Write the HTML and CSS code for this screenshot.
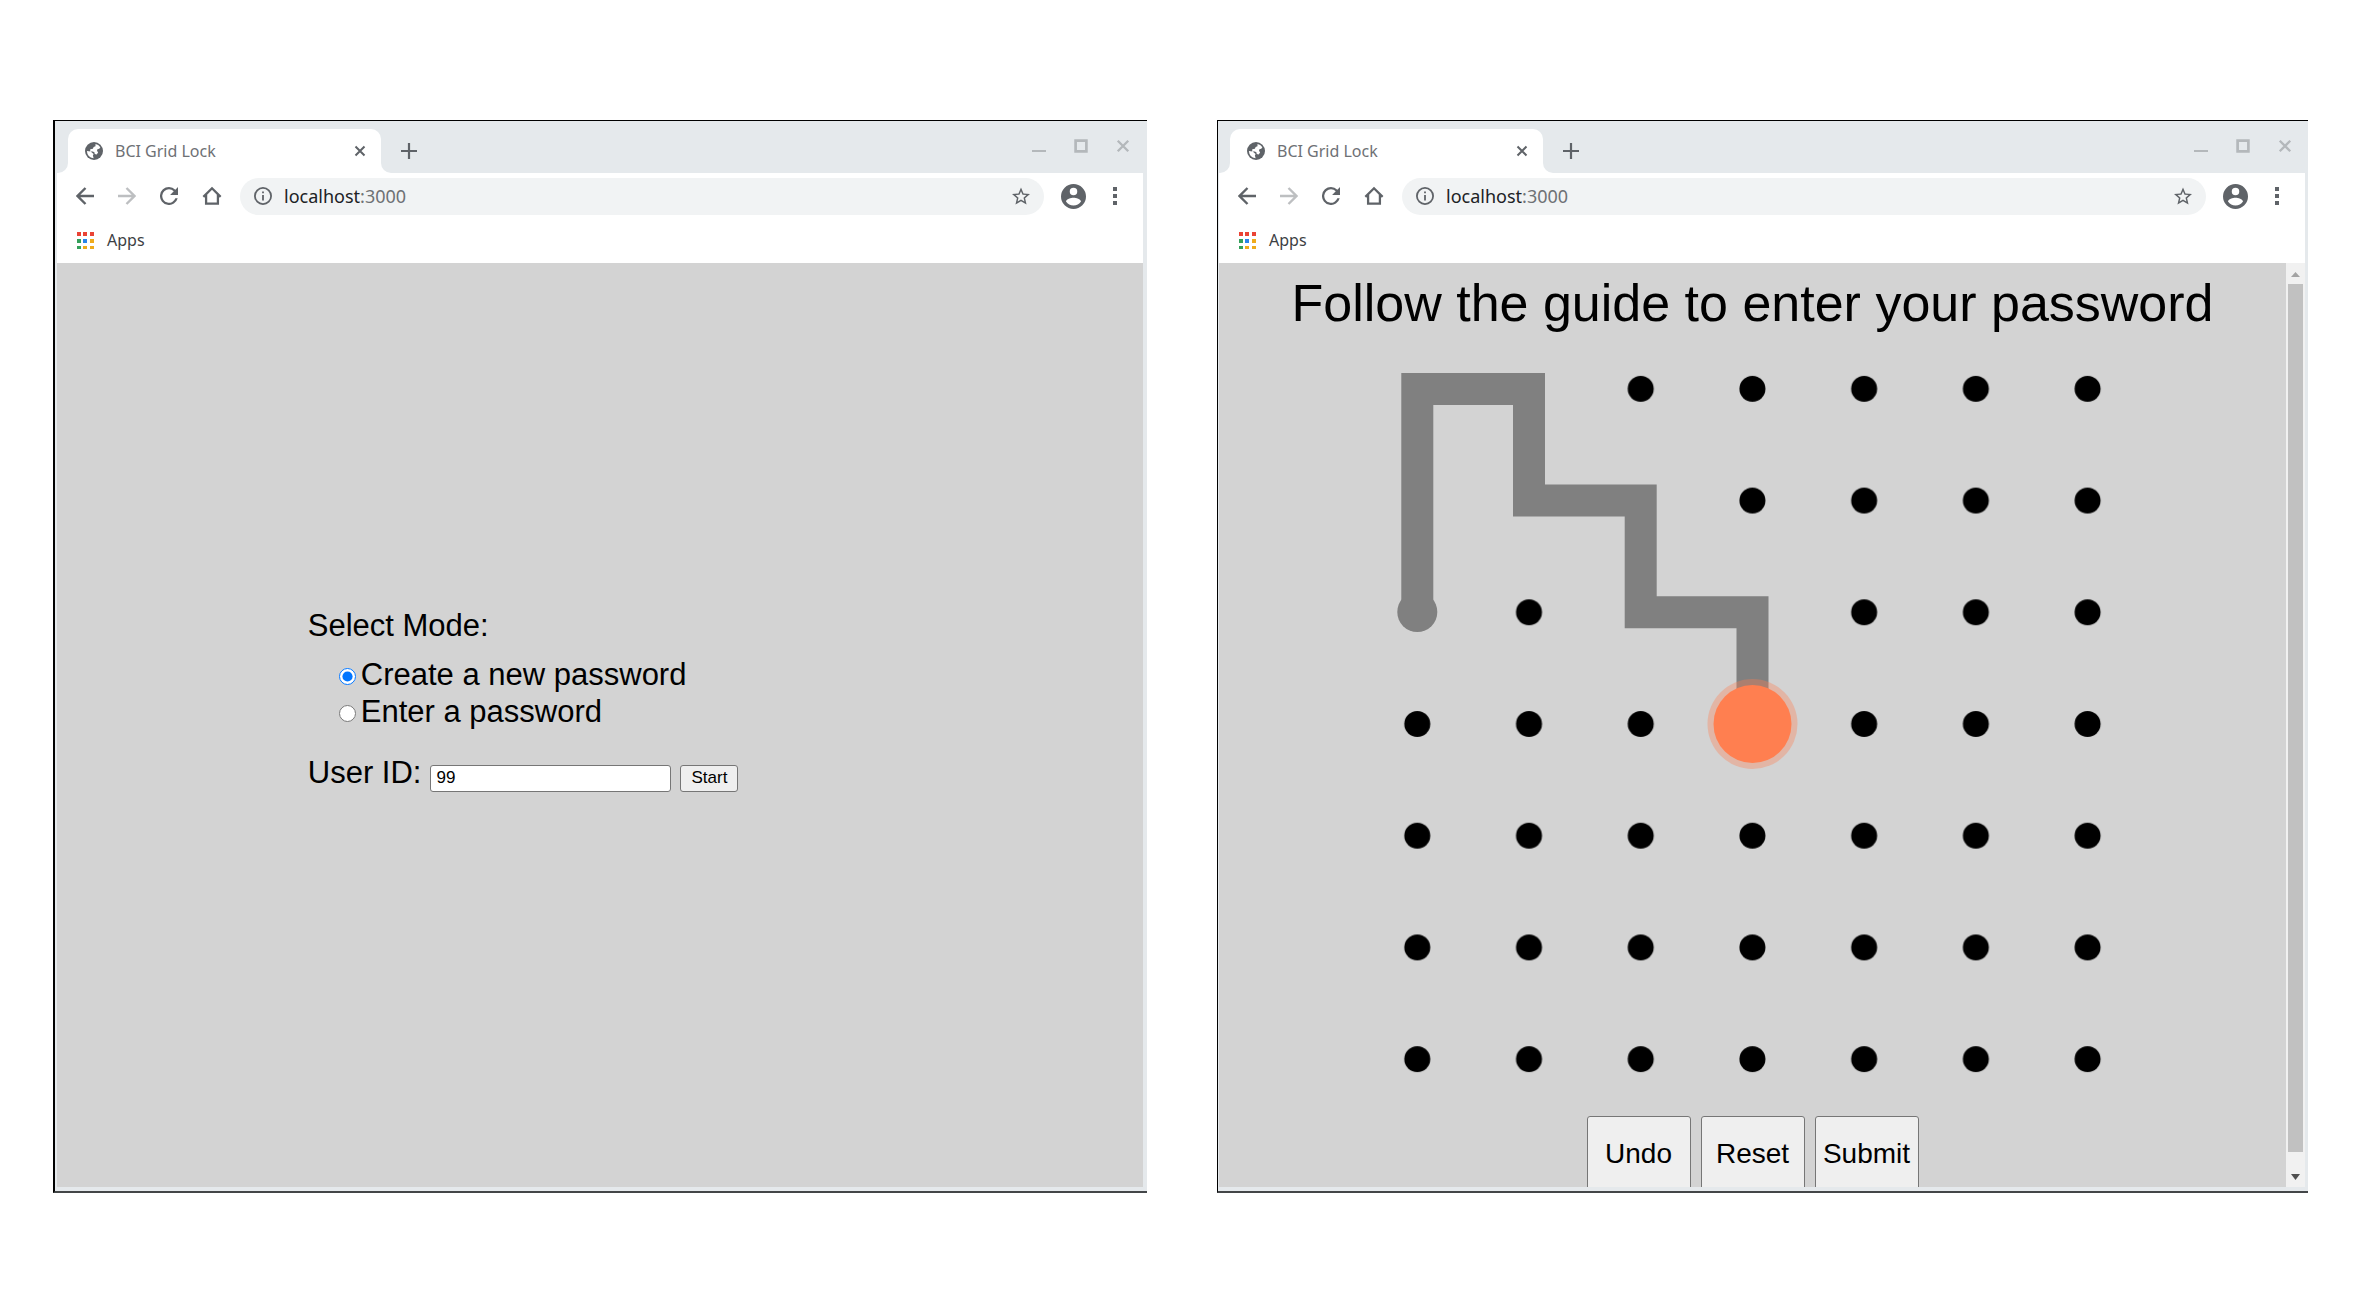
FILE: index.html
```html
<!DOCTYPE html>
<html lang="en">
<head>
<meta charset="utf-8">
<title>BCI Grid Lock</title>
<link rel="stylesheet" href="styles.css">
</head>
<body>
<svg class="defs" aria-hidden="true">
  <symbol id="globe" viewBox="0 0 24 24"><circle cx="12" cy="12" r="12" fill="#5f6368"/><path fill="#fff" d="M14 2.500q4 .5 6.500 4.500l-1.500 2-2.500.5-.5 2 1.500 2.500-2 2.500-2.500-.5-.5-2.500-2-1H7V9.500l3.500-.5 1-2.500 2.500-1zM2.500 12l5 .5 4 3.500-1 2 1 3.500Q3 20.500 2.500 12z"/></symbol>
  <symbol id="close" viewBox="0 0 12 12"><path d="M1.500 1.500l9 9M10.500 1.500l-9 9" stroke="currentColor" stroke-width="2"/></symbol>
  <symbol id="plus" viewBox="0 0 16 16"><path d="M8 0v16M0 8h16" stroke="#5f6368" stroke-width="2.200"/></symbol>
  <symbol id="back" viewBox="0 0 18 18"><path d="M18 9H1.500M9.500 1L1.500 9l8 8" fill="none" stroke="currentColor" stroke-width="2.400"/></symbol>
  <symbol id="reload" viewBox="4 4 16 16"><path fill="#5f6368" d="M17.650 6.350A7.958 7.958 0 0 0 12 4a8 8 0 1 0 7.730 10h-2.080A6 6 0 1 1 12 6c1.660 0 3.140.69 4.220 1.780L13 11h7V4z"/></symbol>
  <symbol id="home" viewBox="0 0 22 21"><path d="M1.500 11.500L11 2l9.500 9.500M4.500 9v10h13V9" fill="none" stroke="#5f6368" stroke-width="2.500"/></symbol>
  <symbol id="info" viewBox="2 2 20 20"><path fill="#5f6368" d="M11 7h2v2h-2zm0 4h2v6h-2zm1-9a10 10 0 1 0 0 20 10 10 0 0 0 0-20zm0 18a8 8 0 1 1 0-16 8 8 0 0 1 0 16z"/></symbol>
  <symbol id="star" viewBox="2 2 20 19"><path fill="#5f6368" d="M22 9.240l-7.190-.62L12 2 9.190 8.630 2 9.240l5.460 4.730L5.820 21 12 17.270 18.180 21l-1.630-7.030L22 9.240zM12 15.400l-3.760 2.270 1-4.280-3.320-2.880 4.380-.38L12 6.100l1.710 4.040 4.380.38-3.320 2.880 1 4.280L12 15.400z"/></symbol>
  <symbol id="avatar" viewBox="2 2 20 20"><path fill="#5f6368" d="M12 2a10 10 0 1 0 0 20 10 10 0 0 0 0-20zm0 3a3 3 0 1 1 0 6 3 3 0 0 1 0-6zm0 14.200a7.200 7.200 0 0 1-6-3.220c.03-1.990 4-3.080 6-3.080s5.970 1.090 6 3.080a7.200 7.200 0 0 1-6 3.220z"/></symbol>
  <symbol id="dots" viewBox="0 0 4 18"><path fill="#5f6368" d="M0 0h4v4H0zM0 7h4v4H0zM0 14h4v4H0z"/></symbol>
  <symbol id="min" viewBox="0 0 14 14"><path d="M0 12h14" stroke="#b4b8bb" stroke-width="2"/></symbol>
  <symbol id="max" viewBox="0 0 13 13"><path d="M1.500 1.500h10v10h-10z" fill="none" stroke="#b4b8bb" stroke-width="2.500"/></symbol>
  <symbol id="apps" viewBox="0 0 17 17"><path fill="#ea4335" d="M0 0h4v4H0zM6 0h4v4H6zM13 0h4v4h-4z"/><path fill="#34a05a" d="M0 7h4v4H0zM0 14h4v3H0z"/><path fill="#2a85ea" d="M6 7h4v4H6z"/><path fill="#efab1c" d="M13 7h4v4h-4zM6 14h4v3H6zM13 14h4v3h-4z"/></symbol>
</svg>

<section class="window window-setup">
  <header class="tabstrip">
    <div class="strip-start"></div>
    <div class="tab-slot"><div class="tab">
      <svg class="i18"><use href="#globe"/></svg>
      <span class="tab-title">BCI Grid Lock</span>
      <button class="icon" aria-label="Close tab"><svg class="i12"><use href="#close"/></svg></button>
    </div></div>
    <div class="strip-rest">
      <button class="icon" aria-label="New tab"><svg class="i16"><use href="#plus"/></svg></button>
      <div class="controls">
        <button class="icon" aria-label="Minimize"><svg class="i14"><use href="#min"/></svg></button>
        <button class="icon" aria-label="Maximize"><svg class="i14"><use href="#max"/></svg></button>
        <button class="icon" aria-label="Close window"><svg class="i14"><use href="#close"/></svg></button>
      </div>
    </div>
  </header>
  <nav class="toolbar">
    <button class="icon" aria-label="Back"><svg class="i18"><use href="#back"/></svg></button>
    <button class="icon forward" aria-label="Forward"><svg class="i18"><use href="#back"/></svg></button>
    <button class="icon" aria-label="Reload"><svg class="i18"><use href="#reload"/></svg></button>
    <button class="icon" aria-label="Home"><svg class="i20"><use href="#home"/></svg></button>
    <div class="address">
      <svg class="i18"><use href="#info"/></svg>
      <span class="url">localhost<span class="port">:3000</span></span>
      <button class="icon" aria-label="Bookmark"><svg class="i18"><use href="#star"/></svg></button>
    </div>
    <button class="icon" aria-label="Profile"><svg class="i25"><use href="#avatar"/></svg></button>
    <button class="icon menu" aria-label="Menu"><svg class="i18"><use href="#dots"/></svg></button>
  </nav>
  <div class="bookmarks"><a href="#apps"><svg class="i17"><use href="#apps"/></svg>Apps</a></div>
  <main class="page">
    <form class="setup">
      <fieldset class="modes">
        <legend>Select Mode:</legend>
        <label><input type="radio" name="mode" checked>Create a new password</label>
        <label><input type="radio" name="mode">Enter a password</label>
      </fieldset>
      <div class="user">
        <label for="uid">User ID:</label>
        <input id="uid" type="text" value="99">
        <button type="button">Start</button>
      </div>
    </form>
  </main>
</section>

<section class="window window-grid">
  <header class="tabstrip">
    <div class="strip-start"></div>
    <div class="tab-slot"><div class="tab">
      <svg class="i18"><use href="#globe"/></svg>
      <span class="tab-title">BCI Grid Lock</span>
      <button class="icon" aria-label="Close tab"><svg class="i12"><use href="#close"/></svg></button>
    </div></div>
    <div class="strip-rest">
      <button class="icon" aria-label="New tab"><svg class="i16"><use href="#plus"/></svg></button>
      <div class="controls">
        <button class="icon" aria-label="Minimize"><svg class="i14"><use href="#min"/></svg></button>
        <button class="icon" aria-label="Maximize"><svg class="i14"><use href="#max"/></svg></button>
        <button class="icon" aria-label="Close window"><svg class="i14"><use href="#close"/></svg></button>
      </div>
    </div>
  </header>
  <nav class="toolbar">
    <button class="icon" aria-label="Back"><svg class="i18"><use href="#back"/></svg></button>
    <button class="icon forward" aria-label="Forward"><svg class="i18"><use href="#back"/></svg></button>
    <button class="icon" aria-label="Reload"><svg class="i18"><use href="#reload"/></svg></button>
    <button class="icon" aria-label="Home"><svg class="i20"><use href="#home"/></svg></button>
    <div class="address">
      <svg class="i18"><use href="#info"/></svg>
      <span class="url">localhost<span class="port">:3000</span></span>
      <button class="icon" aria-label="Bookmark"><svg class="i18"><use href="#star"/></svg></button>
    </div>
    <button class="icon" aria-label="Profile"><svg class="i25"><use href="#avatar"/></svg></button>
    <button class="icon menu" aria-label="Menu"><svg class="i18"><use href="#dots"/></svg></button>
  </nav>
  <div class="bookmarks"><a href="#apps"><svg class="i17"><use href="#apps"/></svg>Apps</a></div>
  <main class="page">
    <div class="lock">
      <h1>Follow the guide to enter your password</h1>
      <svg class="dots" viewBox="0 0 782 782" role="img" aria-label="Password grid">
        <defs>
          <pattern id="dot" width="111.714" height="111.714" patternUnits="userSpaceOnUse"><circle cx="55.300" cy="55.857" r="13"/></pattern>
        </defs>
        <rect width="782" height="782" fill="url(#dot)"/>
        <circle cx="55.300" cy="279" r="20" fill="#808080"/>
        <path d="M55.300 279V56h111.700v111.500h111.700v111.800h111.800V391" fill="none" stroke="#808080" stroke-width="32"/>
        <circle cx="390.500" cy="391" r="45" fill="#ff7f50" fill-opacity=".35"/>
        <circle cx="390.500" cy="391" r="39" fill="#ff7f50"/>
      </svg>
      <div class="actions">
        <button type="button">Undo</button>
        <button type="button">Reset</button>
        <button type="button">Submit</button>
      </div>
    </div>
    <div class="scrollbar" aria-hidden="true">
      <svg class="arrow" viewBox="0 0 19 21"><path fill="#a3a3a3" d="M5 14l4.500-5 4.500 5z"/></svg>
      <div class="thumb"></div>
      <svg class="arrow" viewBox="0 0 19 21"><path fill="#505050" d="M5 8h9l-4.500 6z"/></svg>
    </div>
  </main>
</section>
</body>
</html>
```
FILE: styles.css
```css
* { box-sizing: border-box; }
body {
  margin: 0;
  height: 100vh;
  padding: 120px 54px 106px 53px;
  display: flex;
  gap: 70px;
  background: #fff;
  font-family: "Noto Sans", sans-serif;
}
svg { display: block; flex: none; }
.defs { display: none; }
.i12 { width: 12px; height: 12px; }
.i14 { width: 14px; height: 14px; }
.i16 { width: 16px; height: 16px; }
.i17 { width: 17px; height: 17px; }
.i18 { width: 18px; height: 18px; }
.i20 { width: 20px; height: 20px; }
.i25 { width: 25px; height: 25px; }
.icon {
  display: flex;
  padding: 0;
  border: 0;
  background: none;
  color: #5f6368;
}

.window {
  box-sizing: content-box;
  flex: 1 1 0;
  min-width: 0;
  display: flex;
  flex-direction: column;
  padding-bottom: 4px;
  background: #e5e9ec;
  border: 0 solid #000;
  border-top-width: 1px;
  border-bottom: 2px solid #434648;
}
.window-setup { border-left-width: 2px; padding-left: 2px; padding-right: 4px; }
.window-grid { border-left-width: 1px; padding-left: 1px; padding-right: 3px; }

.tabstrip { display: flex; height: 52px; background: #fff; flex: none; }
.strip-start { width: 11px; background: #e5e9ec; border-bottom-right-radius: 10px; }
.tab-slot { width: 313px; padding-top: 8px; background: linear-gradient(#e5e9ec 50%, #fff 50%); }
.tab {
  height: 44px;
  display: flex;
  align-items: center;
  gap: 12px;
  padding: 0 15px 0 17px;
  background: #fff;
  border-radius: 10px 10px 0 0;
}
.tab-title { flex: 1; font-size: 16px; color: #6e7175; }
.strip-rest {
  flex: 1;
  display: flex;
  justify-content: space-between;
  align-items: center;
  padding: 8px 13px 0 20px;
  background: #e5e9ec;
  border-bottom-left-radius: 10px;
}
.controls { display: flex; gap: 28px; padding-bottom: 10px; }
.controls .icon { color: #b4b8bb; }

.toolbar {
  flex: none;
  display: flex;
  align-items: center;
  height: 46px;
  padding: 0 19px;
  gap: 24px;
  background: #fff;
}
.forward { color: #bdbfc1; transform: rotate(180deg); }
.address {
  flex: 1;
  display: flex;
  align-items: center;
  gap: 12px;
  height: 37px;
  margin: 0 -7px 0 -6px;
  padding: 0 14px;
  background: #f1f3f4;
  border-radius: 19px;
}
.url { flex: 1; font-size: 18px; color: #202124; }
.port { color: #6e7175; }
.menu { width: 18px; margin-left: -4px; justify-content: center; }

.bookmarks {
  flex: none;
  height: 44px;
  padding: 0 20px 2px;
  display: flex;
  align-items: center;
  background: #fff;
}
.bookmarks a {
  display: flex;
  align-items: center;
  gap: 13px;
  font-size: 16px;
  color: #3c4043;
  text-decoration: none;
}

.page {
  flex: 1;
  min-height: 0;
  display: flex;
  overflow: hidden;
  background: #d3d3d3;
  font-family: "Liberation Sans", sans-serif;
  color: #000;
}
.setup { margin: 344px 0 0 23%; padding-left: 1px; font-size: 31px; line-height: 37px; }
.modes { margin: 0 0 24px; padding: 0; border: 0; }
.modes legend { padding: 0 0 12px; }
.modes label { display: flex; align-items: center; gap: 5px; padding-left: 31px; }
.modes input { width: 17px; height: 17px; margin: 4px 0 0; }
.user { display: flex; align-items: baseline; gap: 9px; }
.user input, .user button {
  height: 27px;
  font: 17px "Liberation Sans", sans-serif;
  color: #000;
  border: 1px solid #767676;
  border-radius: 3px;
}
.user input { width: 241px; padding: 0 5px; background: #fff; }
.user button { width: 58px; padding: 0; background: #efefef; }

.lock { flex: 1; display: flex; flex-direction: column; align-items: center; }
.lock h1 { margin: 0; padding-top: 10px; font-size: 52px; line-height: 60px; font-weight: 400; }
.dots { width: 782px; height: 782px; }
.actions { display: flex; gap: 10px; flex: none; padding-top: 1px; }
.actions button {
  width: 104px;
  height: 76px;
  padding: 0;
  font: 28px "Liberation Sans", sans-serif;
  color: #000;
  background: #efefef;
  border: 1px solid #767676;
  border-radius: 3px;
}
.scrollbar { width: 19px; display: flex; flex-direction: column; background: #f1f1f1; }
.arrow { width: 19px; height: 21px; }
.thumb { flex: 1; margin: 0 2px 14px; background: #c1c1c1; }
```
